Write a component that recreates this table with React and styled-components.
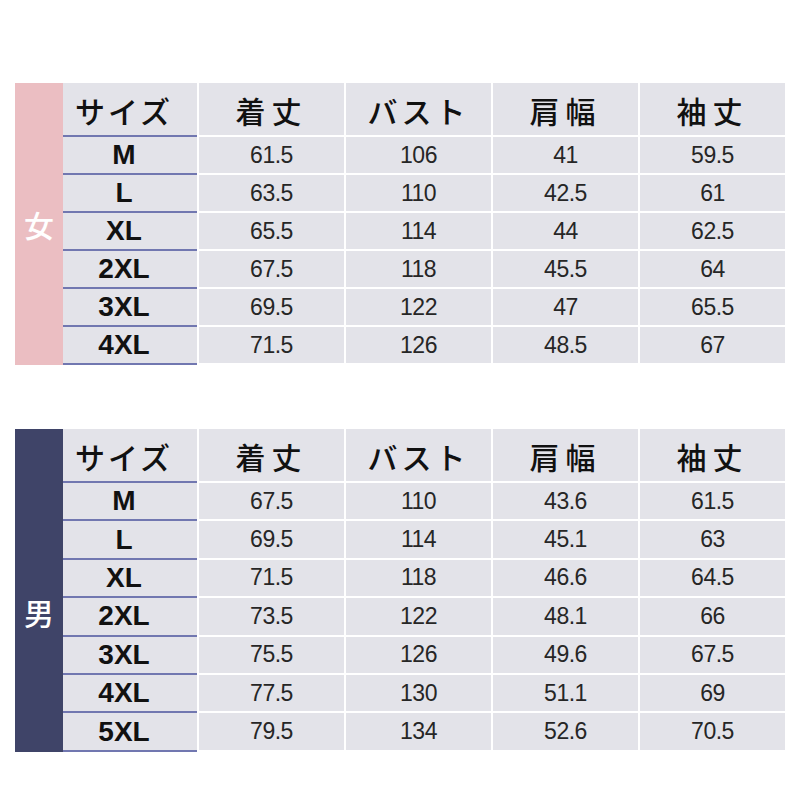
import styled, { createGlobalStyle } from "styled-components";

const Global = createGlobalStyle`
  html, body {
    margin: 0;
    padding: 0;
    background: #ffffff;
  }
`;

const Page = styled.main`
  width: 800px;
  height: 800px;
  box-sizing: border-box;
  padding: 83px 15px 0;
  display: flex;
  flex-direction: column;
  gap: 64px;
  background: #fff;
`;

const Table = styled.section`
  display: flex;
  width: 770px;
`;

const Side = styled.div`
  width: 48px;
  flex: none;
  background: ${(p) => p.$bg};
  display: flex;
  align-items: center;
  justify-content: center;
  box-sizing: border-box;
  padding-top: ${(p) => p.$shift || 0}px;
  color: #fff;
  font-family: "Noto Sans CJK JP", "Noto Sans CJK SC", sans-serif;
  font-size: 30px;
  font-weight: 500;
  line-height: 1;
`;

const Grid = styled.div`
  flex: 1;
  display: grid;
  grid-template-columns: 134px repeat(4, 1fr);
  column-gap: 2px;
`;

const Cell = styled.div`
  background: #e3e3e9;
  box-sizing: border-box;
  height: ${(p) => (p.$head ? 54 : p.$rowH)}px;
  border-bottom: 2px solid ${(p) => (p.$size ? "#7177b0" : "#ffffff")};
  display: flex;
  align-items: center;
  justify-content: center;
  padding-right: ${(p) => (p.$size ? 12 : 0)}px;
`;

const HeadText = styled.span`
  font-family: "Noto Sans CJK JP", "Noto Sans CJK SC", sans-serif;
  font-size: 30px;
  font-weight: 500;
  letter-spacing: ${(p) => p.$spacing || 4}px;
  color: #111;
  line-height: 1;
  margin-top: 2px;
`;

const SizeText = styled.span`
  font-family: "Liberation Sans", Arial, sans-serif;
  font-weight: 700;
  font-size: 28px;
  color: #111;
  line-height: 1;
`;

const Num = styled.span`
  font-family: "Liberation Sans", Arial, sans-serif;
  font-size: 23px;
  letter-spacing: -0.5px;
  color: #262626;
  line-height: 1;
`;

const heads = [
  { t: "着丈", s: 6 },
  { t: "バスト", s: 4 },
  { t: "肩幅", s: 6 },
  { t: "袖丈", s: 6 },
];

const women = [
  ["M", "61.5", "106", "41", "59.5"],
  ["L", "63.5", "110", "42.5", "61"],
  ["XL", "65.5", "114", "44", "62.5"],
  ["2XL", "67.5", "118", "45.5", "64"],
  ["3XL", "69.5", "122", "47", "65.5"],
  ["4XL", "71.5", "126", "48.5", "67"],
];

const men = [
  ["M", "67.5", "110", "43.6", "61.5"],
  ["L", "69.5", "114", "45.1", "63"],
  ["XL", "71.5", "118", "46.6", "64.5"],
  ["2XL", "73.5", "122", "48.1", "66"],
  ["3XL", "75.5", "126", "49.6", "67.5"],
  ["4XL", "77.5", "130", "51.1", "69"],
  ["5XL", "79.5", "134", "52.6", "70.5"],
];

function SizeTable({ label, color, shift, rows, rowH }) {
  return (
    <Table>
      <Side $bg={color} $shift={shift}>{label}</Side>
      <Grid>
        <Cell $head $size>
          <HeadText $spacing={3}>サイズ</HeadText>
        </Cell>
        {heads.map((h) => (
          <Cell $head key={h.t}>
            <HeadText $spacing={h.s}>{h.t}</HeadText>
          </Cell>
        ))}
        {rows.map((r) => [
          <Cell $size $rowH={rowH} key={r[0]}>
            <SizeText>{r[0]}</SizeText>
          </Cell>,
          ...r.slice(1).map((v, i) => (
            <Cell $rowH={rowH} key={r[0] + i}>
              <Num>{v}</Num>
            </Cell>
          )),
        ])}
      </Grid>
    </Table>
  );
}

export default function App() {
  return (
    <>
      <Global />
      <Page>
        <SizeTable label="女" color="#ebbec2" shift={-4} rows={women} rowH={38} />
        <SizeTable label="男" color="#3f4468" shift={44} rows={men} rowH={38.4} />
      </Page>
    </>
  );
}
